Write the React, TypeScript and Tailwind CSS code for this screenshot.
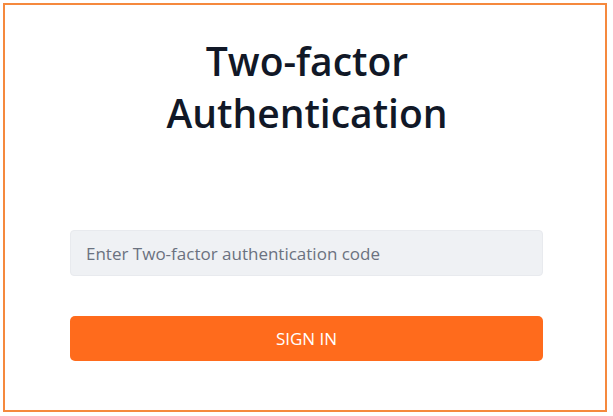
import React from "react";

export default function App() {
  return (
    <div
      className="w-full h-[416px] bg-white pt-[3px] pl-[3px]"
      style={{ fontFamily: '"Open Sans", "Noto Sans", sans-serif' }}
    >
      <div className="w-[604px] h-[409px] border-2 border-[#f5893d] pt-[30px] flex flex-col">
        <h1 className="text-center text-[39px] leading-[52px] font-semibold text-[#111827] pl-[4px]">
          Two-factor
          <br />
          Authentication
        </h1>
        <div className="ml-[65px] w-[473px] mt-[91px] flex flex-col gap-[40px]">
          <input
            type="text"
            placeholder="Enter Two-factor authentication code"
            className="h-[46px] w-full rounded-[4px] bg-[#eff1f4] border border-[#e8eaee] px-[15px] text-[17px] text-[#374151] placeholder:text-[#6b7280] outline-none"
          />
          <button className="h-[45px] w-full rounded-[5px] bg-[#ff6b1c] text-white text-[17px] uppercase">
            Sign in
          </button>
        </div>
      </div>
    </div>
  );
}
